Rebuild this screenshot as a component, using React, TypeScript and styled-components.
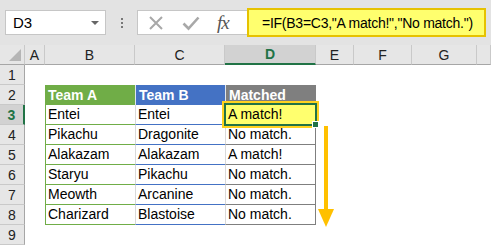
import * as React from "react";
import styled, { createGlobalStyle } from "styled-components";

const GlobalStyle = createGlobalStyle`
  html, body {
    margin: 0;
    padding: 0;
    background: #ffffff;
  }
  body {
    font-family: "Liberation Sans", Arial, sans-serif;
  }
`;

const Window = styled.div`
  width: 491px;
  height: 246px;
  overflow: hidden;
  background: #ffffff;
`;

const Toolbar = styled.div`
  height: 45px;
  display: flex;
  align-items: center;
  padding: 0 5px;
  box-sizing: border-box;
  background: #e3e3e3;
`;

const NameBox = styled.div`
  width: 101px;
  height: 25px;
  box-sizing: border-box;
  border: 1px solid #c6c6c6;
  background: #ffffff;
  display: flex;
  align-items: center;
  justify-content: space-between;
  padding: 0 6px 0 7px;
  font-size: 15px;
  color: #000;
`;

const DropArrow = styled.span`
  width: 0;
  height: 0;
  border-left: 4px solid transparent;
  border-right: 4px solid transparent;
  border-top: 4px solid #666;
`;

const Dots = styled.div`
  width: 31px;
  display: flex;
  flex-direction: column;
  align-items: center;
  gap: 2px;
  & > span {
    width: 2px;
    height: 2px;
    background: #777;
  }
`;

const FormulaButtons = styled.div`
  width: 110px;
  height: 25px;
  box-sizing: border-box;
  border: 1px solid #c6c6c6;
  border-right: none;
  background: #ffffff;
  display: flex;
  align-items: center;
  padding-left: 10px;
  gap: 18px;
`;

const Fx = styled.span`
  font-family: "Liberation Serif", "Times New Roman", serif;
  font-style: italic;
  font-size: 19px;
  color: #555;
  letter-spacing: -1px;
  margin-left: -1px;
`;

const FormulaInput = styled.div`
  width: 239px;
  height: 29px;
  box-sizing: border-box;
  border: 2px solid #e6c200;
  background: #ffff6e;
  display: flex;
  align-items: center;
  padding-left: 13px;
  font-size: 14px;
  letter-spacing: -0.25px;
  color: #000;
  white-space: nowrap;
`;

const Sheet = styled.div`
  position: relative;
  display: grid;
  grid-template-columns: 25px 20px 90px 90px 91px 38px 58px 65px 14px;
  grid-auto-rows: 20px;
`;

const ColHeader = styled.div<{ $active?: boolean; $corner?: boolean }>`
  box-sizing: border-box;
  background: ${(p) => (p.$active ? "#d2d2d2" : "#e6e6e6")};
  border-right: 1px solid #c9c9c9;
  border-bottom: ${(p) => (p.$active ? "2px solid #217346" : "1px solid #a6a6a6")};
  color: ${(p) => (p.$active ? "#217346" : "#222")};
  font-weight: ${(p) => (p.$active ? 700 : 400)};
  font-size: 14px;
  display: flex;
  align-items: center;
  justify-content: center;
  position: relative;
  ${(p) =>
    p.$corner &&
    `
    &::after {
      content: "";
      position: absolute;
      right: 3px;
      bottom: 3px;
      width: 0;
      height: 0;
      border-left: 12px solid transparent;
      border-bottom: 12px solid #b5b5b5;
    }
  `}
`;

const RowHeader = styled.div<{ $active?: boolean }>`
  box-sizing: border-box;
  background: ${(p) => (p.$active ? "#d2d2d2" : "#e6e6e6")};
  border-bottom: 1px solid #c9c9c9;
  border-right: ${(p) => (p.$active ? "2px solid #217346" : "1px solid #a6a6a6")};
  color: ${(p) => (p.$active ? "#217346" : "#222")};
  font-weight: ${(p) => (p.$active ? 700 : 400)};
  font-size: 14px;
  display: flex;
  align-items: center;
  justify-content: center;
`;

const Cell = styled.div`
  box-sizing: border-box;
  background: #ffffff;
`;

const TableHead = styled.div<{ $bg: string; $first?: boolean }>`
  box-sizing: border-box;
  background: ${(p) => p.$bg};
  border-left: ${(p) => (p.$first ? "none" : "1px solid #dfe6ee")};
  color: #ffffff;
  font-weight: 700;
  font-size: 14px;
  padding: 0 3px;
  display: flex;
  align-items: flex-end;
  padding-bottom: 2px;
`;

const TableCell = styled.div<{
  $line: string;
  $first?: boolean;
  $last?: boolean;
  $selected?: boolean;
}>`
  box-sizing: border-box;
  position: relative;
  background: ${(p) => (p.$selected ? "#ffff6e" : "#ffffff")};
  border-bottom: 1px solid ${(p) => p.$line};
  border-left: 1px solid ${(p) => (p.$first ? p.$line : "#d9d9d9")};
  border-right: ${(p) => (p.$last ? `1px solid ${p.$line}` : "none")};
  font-size: 14px;
  color: #000;
  padding: 0 2px;
  display: flex;
  align-items: flex-end;
  padding-bottom: 2px;
  white-space: nowrap;
  ${(p) =>
    p.$selected &&
    `
    &::after {
      content: "";
      position: absolute;
      left: -2px;
      top: -2px;
      right: -2px;
      bottom: -2px;
      border: 2px solid #217346;
      box-shadow: 0 0 0 2px #ffd21f;
      z-index: 2;
    }
    &::before {
      content: "";
      position: absolute;
      right: -4px;
      bottom: -4px;
      width: 5px;
      height: 5px;
      background: #217346;
      border: 1px solid #ffffff;
      z-index: 3;
    }
  `}
`;

const FillArrow = styled.svg`
  position: absolute;
  left: 316px;
  top: 80px;
  z-index: 4;
`;

const columns = ["A", "B", "C", "D", "E", "F", "G", ""];

const tableColumns = [
  { title: "Team A", color: "#70ad47" },
  { title: "Team B", color: "#4472c4" },
  { title: "Matched", color: "#7f7f7f" },
];

const rows = [
  ["Entei", "Entei", "A match!"],
  ["Pikachu", "Dragonite", "No match."],
  ["Alakazam", "Alakazam", "A match!"],
  ["Staryu", "Pikachu", "No match."],
  ["Meowth", "Arcanine", "No match."],
  ["Charizard", "Blastoise", "No match."],
];

const blanks = (n: number, key: string) =>
  Array.from({ length: n }, (_, i) => <Cell key={`${key}-${i}`} />);

export default function App() {
  return (
    <Window>
      <GlobalStyle />
      <Toolbar>
        <NameBox>
          D3
          <DropArrow />
        </NameBox>
        <Dots>
          <span />
          <span />
          <span />
        </Dots>
        <FormulaButtons>
          <svg width="16" height="16" viewBox="0 0 16 16">
            <path d="M2 2 L14 14 M14 2 L2 14" stroke="#a8a8a8" strokeWidth="2" fill="none" />
          </svg>
          <svg width="18" height="16" viewBox="0 0 18 16">
            <path d="M1.5 8.5 L6.5 13.5 L16.5 2.5" stroke="#a8a8a8" strokeWidth="2.6" fill="none" />
          </svg>
          <Fx>fx</Fx>
        </FormulaButtons>
        <FormulaInput>=IF(B3=C3,"A match!","No match.")</FormulaInput>
      </Toolbar>

      <Sheet>
        <ColHeader $corner />
        {columns.map((c) => (
          <ColHeader key={c || "end"} $active={c === "D"}>
            {c}
          </ColHeader>
        ))}

        <RowHeader>1</RowHeader>
        {blanks(8, "r1")}

        <RowHeader>2</RowHeader>
        {blanks(1, "r2a")}
        {tableColumns.map((t, i) => (
          <TableHead key={t.title} $bg={t.color} $first={i === 0}>
            {t.title}
          </TableHead>
        ))}
        {blanks(4, "r2b")}

        {rows.map((r, ri) => (
          <React.Fragment key={ri}>
            <RowHeader $active={ri === 0}>{ri + 3}</RowHeader>
            <Cell />
            {r.map((v, ci) => (
              <TableCell
                key={ci}
                $line={tableColumns[ci].color}
                $first={ci === 0}
                $last={ci === 2}
                $selected={ri === 0 && ci === 2}
              >
                {v}
              </TableCell>
            ))}
            {blanks(4, `r${ri}`)}
          </React.Fragment>
        ))}

        <RowHeader>9</RowHeader>
        {blanks(8, "r9")}

        <FillArrow width="20" height="104" viewBox="0 0 20 104">
          <rect x="8" y="1" width="4" height="88" fill="#ffc000" />
          <path d="M2 84 L18 84 L10 102 Z" fill="#ffc000" />
        </FillArrow>
      </Sheet>
    </Window>
  );
}
